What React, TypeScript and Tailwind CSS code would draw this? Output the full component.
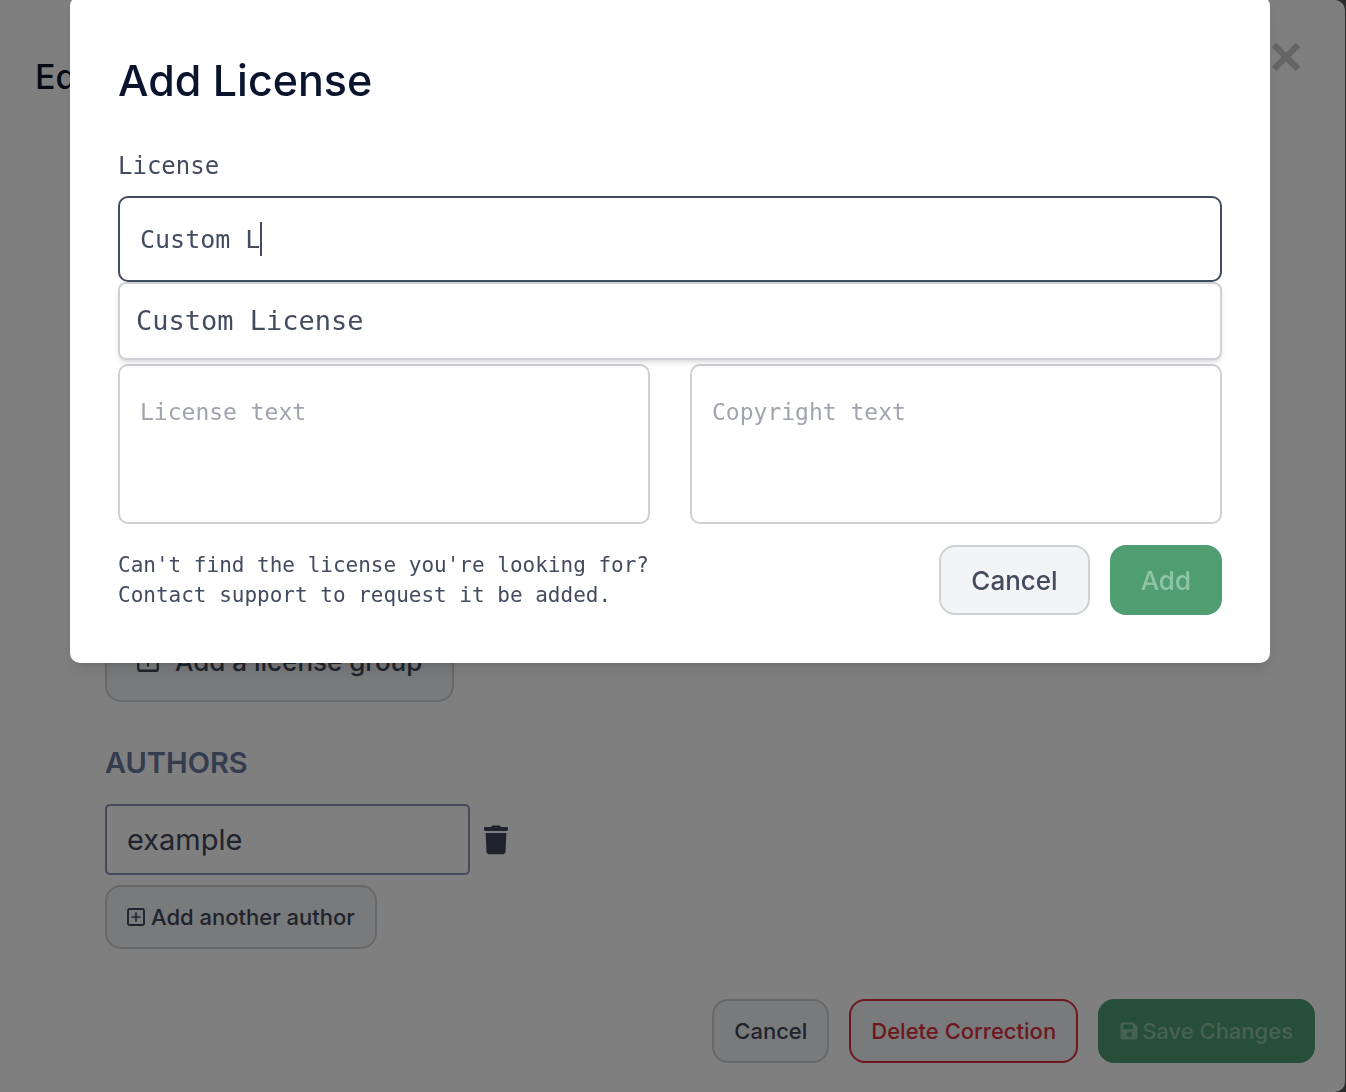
import React, { useState } from 'react';

interface IconProps {
  className?: string;
}

const PlusSquareIcon: React.FC<IconProps> = ({ className }) => (
  <svg viewBox="0 0 18 18" fill="none" stroke="currentColor" className={className} aria-hidden="true">
    <rect x="1" y="1" width="16" height="16" rx="1.5" strokeWidth="1.9" />
    <path d="M9 5.2v7.6M5.2 9h7.6" strokeWidth="1.7" strokeLinecap="round" />
  </svg>
);

const CloseIcon: React.FC<IconProps> = ({ className }) => (
  <svg viewBox="0 0 28 28" fill="currentColor" className={className} aria-hidden="true">
    <g transform="rotate(45 14 14)">
      <rect x="-3" y="10.8" width="34" height="6.4" rx="1" />
      <rect x="10.8" y="-3" width="6.4" height="34" rx="1" />
    </g>
  </svg>
);

const TrashIcon: React.FC<IconProps> = ({ className }) => (
  <svg viewBox="0 0 26 30" fill="currentColor" className={className} aria-hidden="true">
    <path d="M2.2 2h5.6c.5 0 .6-.3.8-.7C8.9.8 9.3.6 10 .6h6c.7 0 1.1.2 1.4.7.2.4.3.7.8.7h5.6c.7 0 1.2.5 1.2 1.2v1.6c0 .7-.5 1.200-1.200 1.200H2.200C1.500 6 1 5.500 1 4.800V3.200C1 2.500 1.500 2 2.200 2z" />
    <path d="M2.600 8h20.800l-.9 18.700c-.1 1.500-1.100 2.500-2.600 2.500H6.100c-1.500 0-2.500-1-2.600-2.500z" />
  </svg>
);

const SaveIcon: React.FC<IconProps> = ({ className }) => (
  <svg viewBox="0 0 18 18" fill="currentColor" className={className} aria-hidden="true">
    <path
      fillRule="evenodd"
      d="M2.800.5h10.400L17.500 4.800v10.400a2.300 2.300 0 0 1-2.300 2.300H2.800A2.300 2.300 0 0 1 .5 15.200V2.800A2.300 2.300 0 0 1 2.800.5zM4.200 2.600a1 1 0 0 0-1 1v2.600a1 1 0 0 0 1 1h7.600a1 1 0 0 0 1-1V3.600a1 1 0 0 0-1-1zM9.500 10a2.600 2.600 0 1 0 0 5.200 2.600 2.600 0 0 0 0-5.200z"
    />
  </svg>
);

const EditPanel: React.FC = () => {
  const [author, setAuthor] = useState('example');

  return (
    <main className="mr-px min-h-screen flex flex-col bg-white rounded-r-[10px] text-[#3f475a]">
      <header className="flex items-start justify-between pt-[43px] pl-[35px] pr-[45px]">
        <h1 className="text-[34px] leading-[50px] font-medium text-[#0a142d] mt-[9px]">Edit</h1>
        <button aria-label="Close" className="text-[#cacaca]">
          <CloseIcon className="w-7 h-7 overflow-visible" />
        </button>
      </header>

      <div className="flex flex-col items-start flex-1 justify-end px-[105px]">
        <button className="flex items-center gap-4 h-[78px] px-[30px] pb-1 border-2 border-[#cdd0d5] rounded-2xl bg-[#f3f4f6] text-[26px] font-medium">
          <PlusSquareIcon className="w-[22px] h-[22px]" />
          Add a license group
        </button>
        <label htmlFor="author" className="mt-[41px] text-[29px] leading-10 font-semibold text-[#68799f]">
          AUTHORS
        </label>
        <div className="flex items-center gap-[13px] mt-[21px]">
          <input
            id="author"
            value={author}
            onChange={(e) => setAuthor(e.target.value)}
            className="w-[365px] h-[71px] px-5 border-2 border-[#8a93b4] rounded-[5px] text-[29px] outline-none"
          />
          <button aria-label="Remove author">
            <TrashIcon className="w-[26px] h-[30px]" />
          </button>
        </div>
        <button className="flex items-center gap-[6px] mt-[10px] h-16 px-5 border-2 border-[#cdd0d5] rounded-2xl bg-[#f3f4f6] text-[22px] font-medium">
          <PlusSquareIcon className="w-[18px] h-[18px]" />
          Add another author
        </button>
      </div>

      <footer className="flex justify-end gap-5 mt-[50px] pr-[30px] pb-[29px] text-[22px] font-medium">
        <button className="h-16 px-5 border-2 border-[#cdd0d5] rounded-2xl bg-[#f3f4f6]">Cancel</button>
        <button className="h-16 px-5 border-2 border-[#d9303d] rounded-2xl bg-[#f3f4f6] text-[#d9303d]">
          Delete Correction
        </button>
        <button
          disabled
          className="flex items-center gap-1 h-16 px-5 border-2 border-[#4f9d70] rounded-2xl bg-[#4f9d70] text-[#8fc4a6]"
        >
          <SaveIcon className="w-[18px] h-[18px]" />
          Save Changes
        </button>
      </footer>
    </main>
  );
};

const AddLicenseDialog: React.FC = () => {
  const [license, setLicense] = useState('Custom L');

  return (
    <div className="fixed inset-0 overflow-hidden bg-black/50 pl-[70px] pr-[76px]">
      <div
        role="dialog"
        aria-labelledby="dialog-title"
        className="-mt-1 px-12 pt-[60px] pb-12 bg-white rounded-[10px] shadow-lg text-[#434b5e]"
      >
        <h2 id="dialog-title" className="text-[43px] leading-[48px] font-medium text-[#0a142d]">
          Add License
        </h2>

        <div className="font-['DejaVu_Sans_Mono',monospace] text-[24px]">
          <label htmlFor="license" className="block mt-11 leading-9">
            License
          </label>
          <div className="relative mt-3">
            <input
              id="license"
              value={license}
              onChange={(e) => setLicense(e.target.value)}
              className="block w-full h-[86px] px-5 border-2 border-[#434b5e] rounded-[10px] text-[25px] outline-none caret-transparent"
            />
            {/* text cursor, placed after the typed value */}
            <div
              className="absolute inset-0 flex items-center px-[22px] text-[25px] pointer-events-none"
              aria-hidden="true"
            >
              <span className="invisible whitespace-pre">{license}</span>
              <span className="w-[2px] h-[34px] bg-[#434b5e]" />
            </div>
            <ul className="absolute top-full inset-x-0 bg-white border-2 border-[#cdd0d5] rounded-lg shadow-md">
              <li>
                <button className="w-full h-[74px] px-4 text-left text-[27px]">Custom License</button>
              </li>
            </ul>
          </div>
          <div className="grid grid-cols-2 gap-10 mt-[82px] text-[23px]">
            <textarea
              aria-label="License text"
              placeholder="License text"
              className="block h-40 px-5 py-7 leading-9 border-2 border-[#cdd0d5] rounded-[10px] resize-none placeholder:text-[#a0a4af]"
            />
            <textarea
              aria-label="Copyright text"
              placeholder="Copyright text"
              className="block h-40 px-5 py-7 leading-9 border-2 border-[#cdd0d5] rounded-[10px] resize-none placeholder:text-[#a0a4af]"
            />
          </div>
        </div>

        <div className="flex items-center justify-between mt-[21px]">
          <p className="font-['DejaVu_Sans_Mono',monospace] text-[21px] leading-[30px]">
            Can't find the license you're looking for?
            <br />
            Contact support to request it be added.
          </p>
          <div className="flex gap-5 text-[26px] font-medium">
            <button className="h-[70px] px-[30px] border-2 border-[#cdd0d5] rounded-2xl bg-[#f3f4f6]">Cancel</button>
            <button disabled className="h-[70px] px-[31px] rounded-2xl bg-[#4f9d70] text-[#8fc4a6]">
              Add
            </button>
          </div>
        </div>
      </div>
    </div>
  );
};

export default function App() {
  return (
    <div className="min-h-screen bg-[#555] font-['Inter',sans-serif]">
      <EditPanel />
      <AddLicenseDialog />
    </div>
  );
}
